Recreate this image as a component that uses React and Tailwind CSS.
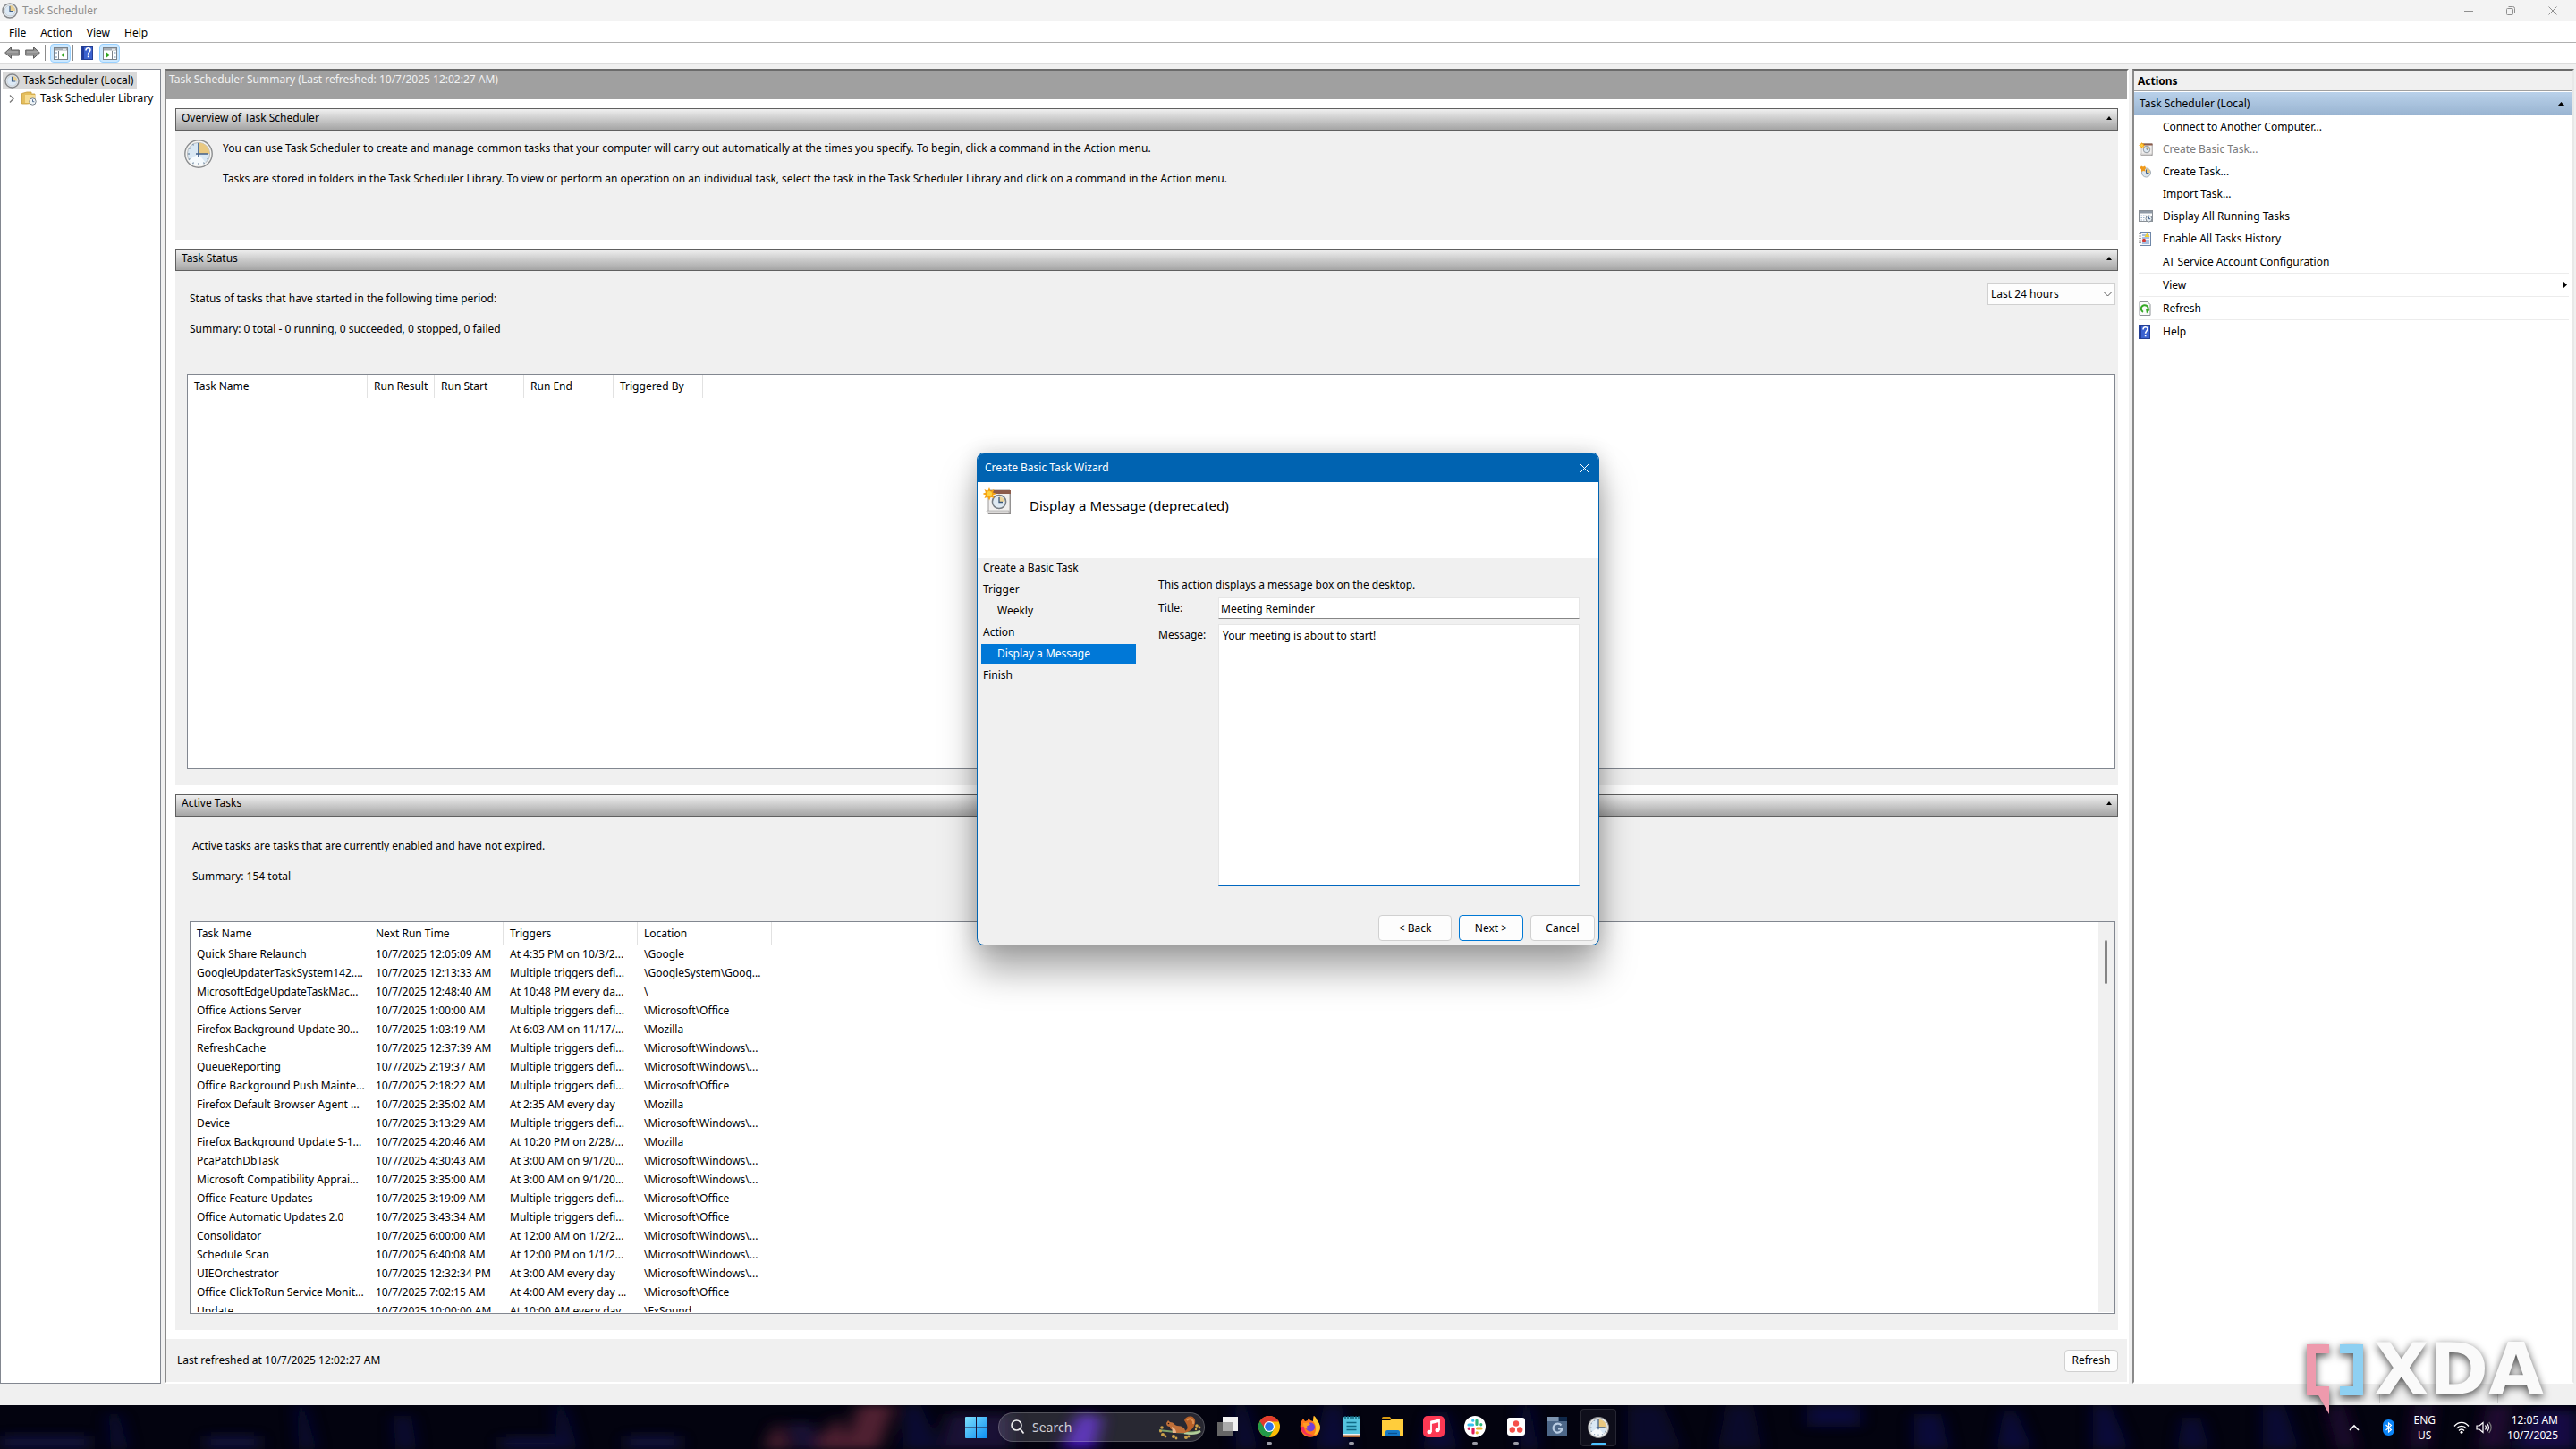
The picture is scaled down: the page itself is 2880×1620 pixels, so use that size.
import React, { useState } from "react";

const ACTIVE_TASKS = [
  ["Quick Share Relaunch", "10/7/2025 12:05:09 AM", "At 4:35 PM on 10/3/2...", "\\Google"],
  ["GoogleUpdaterTaskSystem142....", "10/7/2025 12:13:33 AM", "Multiple triggers defi...", "\\GoogleSystem\\Goog..."],
  ["MicrosoftEdgeUpdateTaskMac...", "10/7/2025 12:48:40 AM", "At 10:48 PM every da...", "\\"],
  ["Office Actions Server", "10/7/2025 1:00:00 AM", "Multiple triggers defi...", "\\Microsoft\\Office"],
  ["Firefox Background Update 30...", "10/7/2025 1:03:19 AM", "At 6:03 AM on 11/17/...", "\\Mozilla"],
  ["RefreshCache", "10/7/2025 12:37:39 AM", "Multiple triggers defi...", "\\Microsoft\\Windows\\..."],
  ["QueueReporting", "10/7/2025 2:19:37 AM", "Multiple triggers defi...", "\\Microsoft\\Windows\\..."],
  ["Office Background Push Mainte...", "10/7/2025 2:18:22 AM", "Multiple triggers defi...", "\\Microsoft\\Office"],
  ["Firefox Default Browser Agent ...", "10/7/2025 2:35:02 AM", "At 2:35 AM every day", "\\Mozilla"],
  ["Device", "10/7/2025 3:13:29 AM", "Multiple triggers defi...", "\\Microsoft\\Windows\\..."],
  ["Firefox Background Update S-1...", "10/7/2025 4:20:46 AM", "At 10:20 PM on 2/28/...", "\\Mozilla"],
  ["PcaPatchDbTask", "10/7/2025 4:30:43 AM", "At 3:00 AM on 9/1/20...", "\\Microsoft\\Windows\\..."],
  ["Microsoft Compatibility Apprai...", "10/7/2025 3:35:00 AM", "At 3:00 AM on 9/1/20...", "\\Microsoft\\Windows\\..."],
  ["Office Feature Updates", "10/7/2025 3:19:09 AM", "Multiple triggers defi...", "\\Microsoft\\Office"],
  ["Office Automatic Updates 2.0", "10/7/2025 3:43:34 AM", "Multiple triggers defi...", "\\Microsoft\\Office"],
  ["Consolidator", "10/7/2025 6:00:00 AM", "At 12:00 AM on 1/2/2...", "\\Microsoft\\Windows\\..."],
  ["Schedule Scan", "10/7/2025 6:40:08 AM", "At 12:00 PM on 1/1/2...", "\\Microsoft\\Windows\\..."],
  ["UIEOrchestrator", "10/7/2025 12:32:34 PM", "At 3:00 AM every day", "\\Microsoft\\Windows\\..."],
  ["Office ClickToRun Service Monit...", "10/7/2025 7:02:15 AM", "At 4:00 AM every day ...", "\\Microsoft\\Office"],
  ["Update", "10/7/2025 10:00:00 AM", "At 10:00 AM every day", "\\FxSound"],
];

// --- Small icons ---
function ClockIcon({ className }) {
  return (
    <svg viewBox="0 0 32 32" className={className} aria-hidden="true">
      <circle cx="16" cy="16" r="15.2" fill="#f4f4f2" stroke="#8b8d8f" strokeWidth="1.4" />
      <circle cx="16" cy="16" r="12.6" fill="#d9e8f4" stroke="#b9bcc0" strokeWidth="1" />
      <path d="M16 16 L5 23 A12.600 12.600 0 0 0 24 26 Z" fill="#f5fafd" />
      <path d="M16 16 V3.600 A12.400 12.400 0 0 1 28.400 16 Z" fill="#e9c981" />
      <g stroke="#7f95ab" strokeWidth="1.300">
        <path d="M16 26v2M4 16h2M9.500 4.800l1 1.700M4.800 9.500l1.700 1M4.800 22.500l1.700-1M9.500 27.200l1-1.700M22.500 27.200l-1-1.700M27.200 22.500l-1.700-1" />
      </g>
      <path d="M16 4v15M13 16h13" stroke="#40608a" strokeWidth="1.700" fill="none" />
    </svg>
  );
}

function SmallClockIcon({ className }) {
  return (
    <svg viewBox="0 0 18 18" className={className} aria-hidden="true">
      <circle cx="9" cy="9" r="8" fill="#e8eef4" stroke="#85878a" strokeWidth="1.500" />
      <circle cx="9" cy="9" r="6" fill="#dce9f5" stroke="#c3c6c9" strokeWidth=".8" />
      <path d="M9 9V3a6 6 0 0 1 6 6z" fill="#ecd08f" />
      <path d="M9 4v5.500h4" stroke="#3f5f87" strokeWidth="1.200" fill="none" />
    </svg>
  );
}

function FolderClockIcon() {
  return (
    <svg viewBox="0 0 17 16" className="h-4 w-[17px]" aria-hidden="true">
      <path d="M.5 2.500L6 1h5v2h4v10L6 14H.5z" fill="#e5be5c" stroke="#c79c3a" strokeWidth=".8" />
      <path d="M4 4h11v9H4z" fill="#f6dc92" />
      <circle cx="12.500" cy="11.500" r="3.700" fill="#eef4f8" stroke="#77818b" />
      <path d="M12.500 9.300v2.400h1.800" stroke="#3f5f87" fill="none" strokeWidth=".9" />
    </svg>
  );
}

function HelpIcon({ className }) {
  return (
    <svg viewBox="0 0 13 16" className={className} aria-hidden="true">
      <rect x=".5" y=".5" width="12" height="15" fill="#3b62cf" stroke="#243f94" />
      <rect x="1" y="1" width="2" height="14" fill="#203a9c" />
      <path d="M5 5.500c0-3.600 5-3.600 5-.7C10 7 7.600 7 7.600 9.800" fill="none" stroke="#fff" strokeWidth="1.600" />
      <rect x="6.800" y="11.500" width="1.700" height="1.800" fill="#fff" />
    </svg>
  );
}

function ArrowIcon({ flip }) {
  return (
    <svg viewBox="0 0 17 14" className="h-3.5 w-[17px]" aria-hidden="true">
      <path
        d={flip ? "M16.400 7L9.500.7V4H.7v6h8.800v3.300z" : "M.6 7L7.500.7V4h8.800v6H7.500v3.300z"}
        fill="#8f8f8f" stroke="#5f5f5f" strokeWidth="1"
      />
      <path d={flip ? "M2 6h12" : "M3 6h12"} stroke="#b5b5b5" />
    </svg>
  );
}

function PaneIcon({ right }) {
  return (
    <svg viewBox="0 0 16 14" className="h-3.5 w-4" aria-hidden="true">
      <rect x=".5" y=".5" width="15" height="13" fill="#fff" stroke="#7b8188" />
      <rect x="1" y="1" width="14" height="2.500" fill="#a7adb4" />
      <path d="M10 2.200h4" stroke="#fff" />
      <path d={right ? "M10.500 4v9" : "M5.500 4v9"} stroke="#7b8188" />
      <path d={right ? "M12 6h2.500M12 8.500h2.500M12 11h2.500" : "M1.500 6H4M1.500 8.500H4M1.500 11H4"} stroke="#6f8fb3" />
      <path d={right ? "M4 5.500l4 3-4 3z" : "M12 5.500l-4 3 4 3z"} fill="#2fa51e" />
    </svg>
  );
}

function NewTaskIcon({ className }) {
  return (
    <svg viewBox="0 0 32 32" className={className} aria-hidden="true">
      <path d="M6 4h25v26H6z" fill="#8d8b8b" />
      <path d="M6 3h24v25H6z" fill="#f1efee" stroke="#9c9a99" />
      <path d="M7 3h24v4H7z" fill="#8c5b4b" />
      <path d="M4 26h25v3H5z" fill="#dcdad9" stroke="#a09e9d" strokeWidth=".6" />
      <circle cx="18" cy="16" r="7.600" fill="#dfe9f2" stroke="#777d84" strokeWidth="1.500" />
      <path d="M18 16V10a6 6 0 0 1 6 6z" fill="#edd59b" />
      <path d="M18 11v5.500h4" stroke="#3c5878" strokeWidth="1.300" fill="none" />
      <path d="M7 0l1.600 3.700L12.500 2 11 5.600 15 7l-4 1.600L12.600 12 8.700 10.700 7 14.500 5.300 10.700 1.500 12 3 8.500-.5 7 3 5.500 1.500 2l3.800 1.700z" fill="#f6a313" />
      <circle cx="7" cy="7" r="3" fill="#ffd23f" />
    </svg>
  );
}

function CreateTaskIcon() {
  return (
    <svg viewBox="0 0 16 16" className="size-4" aria-hidden="true">
      <circle cx="8.500" cy="9" r="5" fill="#dce5ec" stroke="#a4adb5" />
      <path d="M8.500 9V4.500A4.500 4.500 0 0 1 13 9z" fill="#e9c57a" />
      <path d="M8.500 5.500V9.500h3" stroke="#41618a" fill="none" />
      <path d="M3 1.500l2 1 2-1 1 2-1 2.500 1 1.500-3-.5L3 8V5.500L1.500 3.500z" fill="#f09a1a" />
    </svg>
  );
}

function RunningIcon() {
  return (
    <svg viewBox="0 0 16 14" className="h-3.5 w-4" aria-hidden="true">
      <rect x=".5" y=".5" width="15" height="12" fill="#fbfbfb" stroke="#8a9097" />
      <rect x="1" y="1" width="14" height="2.500" fill="#8f99a5" />
      <path d="M2.500 6h6M2.500 8.500h5M2.500 11h5" stroke="#9bb3cc" strokeDasharray="1.500 1" />
      <circle cx="11.500" cy="9.500" r="3.500" fill="#e7eef3" stroke="#7c868f" />
      <path d="M11.500 7.500v2.200h1.600" stroke="#41618a" fill="none" />
    </svg>
  );
}

function HistoryIcon() {
  return (
    <svg viewBox="0 0 14 16" className="h-4 w-3.5" aria-hidden="true">
      <rect x="1.500" y=".5" width="12" height="15" fill="#f4f7fb" stroke="#6f87a8" />
      <path d="M.5 2.500h2M.5 5h2M.5 7.500h2M.5 10h2M.5 12.500h2" stroke="#555" />
      <path d="M4 4h8M4 7h8M4 10h8M4 13h8" stroke="#5b86c4" />
      <path d="M9.500 1.500L12.500 6h-6z" fill="#f2cf2e" />
      <circle cx="6" cy="9.800" r="2" fill="#d63a31" />
    </svg>
  );
}

function RefreshIcon() {
  return (
    <svg viewBox="0 0 14 16" className="h-4 w-3.5" aria-hidden="true">
      <path d="M1 .5h9l3 3v12H1z" fill="#fbfbfb" stroke="#8d9196" />
      <path d="M5 11.800A4 4 0 1 1 9.600 11" fill="none" stroke="#35a926" strokeWidth="2" />
      <path d="M8 8.500l4.500 1-3.500 4z" fill="#35a926" />
    </svg>
  );
}

// --- Shared pieces ---
function Section({ title, children, className }) {
  return (
    <section className={`flex flex-col bg-[#f0f0f0] ${className}`}>
      <h2 className="flex h-[25px] shrink-0 items-center justify-between border border-[#606060] bg-linear-to-b from-[#f0f0f0] to-[#a5a5a5] px-1.5 pb-1">
        <span>{title}</span>
        <svg viewBox="0 0 6 4" className="h-1 w-1.5" aria-hidden="true"><path d="M3 0l3 4H0z" /></svg>
      </h2>
      {children}
    </section>
  );
}

function HeadRow({ columns }) {
  return (
    <thead>
      <tr className="h-[26px]">
        {columns.map((c) => (
          <th key={c} scope="col" className="border-r border-[#e2e2e2] pl-[7px] text-left font-normal whitespace-nowrap">{c}</th>
        ))}
      </tr>
    </thead>
  );
}

function ActionItem({ icon, label, disabled, line, submenu }) {
  return (
    <li className={line ? "border-t border-[#ececec]" : ""}>
      <button disabled={disabled} className="flex h-[25px] w-full items-center text-left disabled:text-[#7a7a7a]">
        <span className="flex w-[27px] shrink-0">{icon}</span>
        <span className="flex-1">{label}</span>
        {submenu && <svg viewBox="0 0 5 9" className="mr-0.5 h-[9px] w-[5px]" aria-hidden="true"><path d="M0 0l5 4.500L0 9z" /></svg>}
      </button>
    </li>
  );
}

// --- Wizard dialog ---
function Wizard({ onClose }) {
  const [title, setTitle] = useState("Meeting Reminder");
  const [message, setMessage] = useState("Your meeting is about to start!");
  const button = "h-[29px] rounded border bg-[#fdfdfd]";

  return (
    <div className="pointer-events-none absolute inset-0 flex items-center justify-center pb-2">
      <div role="dialog" aria-labelledby="wizard-title" className="pointer-events-auto flex h-[551px] w-[696px] flex-col overflow-hidden rounded-lg border border-[#0063b1] bg-[#f0f0f0] shadow-[0_28px_40px_rgba(0,0,0,0.34),0_0_22px_rgba(0,0,0,0.16)]">
        <div className="flex h-8 shrink-0 items-center justify-between bg-[#0063b1] pr-2.5 pl-2 text-white">
          <h2 id="wizard-title">Create Basic Task Wizard</h2>
          <button aria-label="Close" onClick={onClose}>
            <svg viewBox="0 0 11 11" className="size-[11px]" aria-hidden="true"><path d="M.5.5l10 10M10.500.5l-10 10" stroke="#fff" /></svg>
          </button>
        </div>
        <div className="flex h-[85px] shrink-0 gap-5 bg-white pt-1.5 pl-1.5">
          <NewTaskIcon className="size-8" />
          <h3 className="pt-2.5 text-[15px] leading-5">Display a Message (deprecated)</h3>
        </div>

        <div className="flex flex-1">
          <ol className="flex w-[181px] flex-col pl-1 leading-[22px]">
            <li className="mb-0.5 pl-0.5">Create a Basic Task</li>
            <li className="mb-0.5 pl-0.5">Trigger</li>
            <li className="mb-0.5 pl-[18px]">Weekly</li>
            <li className="mb-0.5 pl-0.5">Action</li>
            <li className="mr-1 mb-0.5 bg-[#0078d7] pl-[18px] text-white">Display a Message</li>
            <li className="pl-0.5">Finish</li>
          </ol>
          <form className="flex flex-1 flex-col pt-5 pr-[21px] pl-[21px]" onSubmit={(e) => e.preventDefault()}>
            <p className="mb-1 leading-5">This action displays a message box on the desktop.</p>
            <div className="mb-1.5 flex items-center">
              <label htmlFor="msg-title" className="w-[67px]">Title:</label>
              <input id="msg-title" value={title} onChange={(e) => setTitle(e.target.value)} className="h-6 min-w-0 flex-1 border border-[#e6e6e6] border-b-[#868686] bg-white px-0.5 outline-none" />
            </div>
            <div className="flex">
              <label htmlFor="msg-body" className="w-[67px] pt-1">Message:</label>
              <textarea id="msg-body" value={message} onChange={(e) => setMessage(e.target.value)} className="h-[293px] min-w-0 flex-1 resize-none border border-b-2 border-[#e6e6e6] border-b-[#0067c0] bg-white px-1 pt-1 outline-none" />
            </div>
          </form>
        </div>

        <div className="flex justify-end gap-2 pr-1 pb-1">
          <button className={`${button} w-[82px] border-[#d0d0d0]`}>&lt; Back</button>
          <button className={`${button} w-[72px] border-[#0078d4]`}>Next &gt;</button>
          <button onClick={onClose} className={`${button} w-[72px] border-[#d0d0d0]`}>Cancel</button>
        </div>
      </div>
    </div>
  );
}

// --- Taskbar ---
const TASKBAR_APPS = [
  {
    name: "Task View",
    art: <><rect x="0" y="7" width="17" height="16" fill="#666" /><rect x="6" y="1" width="17" height="16" fill="#f2f2f2" /><rect x="6" y="7" width="11" height="10" fill="#aaa" /></>,
  },
  {
    name: "Google Chrome",
    dot: true,
    art: (
      <>
        <circle cx="12" cy="12" r="12" fill="#fbbc05" />
        <path d="M1.600 6A12 12 0 0 0 12 24l5.200-9L12 12z" fill="#229a48" />
        <path d="M12 6.500h10.600A12 12 0 0 0 1.600 6L7 14z" fill="#e33b2e" />
        <circle cx="12" cy="12" r="6" fill="#fff" />
        <circle cx="12" cy="12" r="4.800" fill="#2a72ec" />
      </>
    ),
  },
  {
    name: "Firefox",
    art: (
      <>
        <path d="M2 6l2-3 2 3 3-1c0-1 .5-2 1-2.500L12 5l3 1 .500-6c4 3 3 5 5 7 3 4 3 9 0 13-4 5-13 5-17 0C.5 16 0 10 2 6z" fill="#ff7a1c" />
        <path d="M16 0c3 2 3 5 5 7 3 5 2 8 0 11-1 2-3 3-5 3 3-4 3-11-1-15z" fill="#ffc52e" />
        <path d="M1 12c1 8 8 12 14 9-7 0-10-4-10-9z" fill="#f5305c" />
        <circle cx="12" cy="12.500" r="5" fill="#7440d8" />
        <path d="M4 8l6-.5 2 2-4 2 1 3c-4-1-5-3-5-6.500z" fill="#ff9c24" />
      </>
    ),
  },
  {
    name: "Notepad",
    dot: true,
    art: (
      <>
        <rect x="3" y="1" width="18" height="22" rx="1" fill="#55c3de" />
        <path d="M3 21h18v3H3z" fill="#a9602d" />
        <path d="M3 20h18v1.500H3z" fill="#eee" />
        <path d="M5 0v3M8 0v3M11 0v3M14 0v3M17 0v3M20 0v3" stroke="#11647c" strokeWidth="1.400" />
        <path d="M6.500 7.500h11M6.500 11.500h11M6.500 15.500h11" stroke="#0f6a86" strokeWidth="1.300" />
      </>
    ),
  },
  {
    name: "File Explorer",
    art: (
      <>
        <path d="M0 2.500Q0 1 1.500 1H9l2 3H0z" fill="#d79a12" />
        <path d="M0 5h9l2-1.500h13V23H0z" fill="#ffcd3c" />
        <path d="M4 23v-5q0-2 2-2h12q2 0 2 2v5z" fill="#1579c7" />
        <path d="M7 19.500h10" stroke="#0b4f8d" strokeWidth="1.300" />
      </>
    ),
  },
  {
    name: "Apple Music",
    art: (
      <>
        <rect width="24" height="24" rx="5" fill="#fb3853" />
        <path d="M9 18V6.500l9-2v11.500" fill="none" stroke="#fff" strokeWidth="1.800" />
        <path d="M9 7.500l9-2" stroke="#fff" strokeWidth="3" />
        <ellipse cx="7" cy="18" rx="2.600" ry="2.200" fill="#fff" />
        <ellipse cx="16" cy="16" rx="2.600" ry="2.200" fill="#fff" />
      </>
    ),
  },
  {
    name: "Slack",
    dot: true,
    art: (
      <>
        <circle cx="12" cy="12" r="12" fill="#fff" />
        <g strokeWidth="3.200" strokeLinecap="round">
          <path d="M5 10h4.500M9.700 5.200h.1" stroke="#36c5f0" />
          <path d="M14 5v4.500M18.800 9.700v.1" stroke="#2eb67d" />
          <path d="M14.500 14H19M14.200 18.800h.1" stroke="#ecb22e" />
          <path d="M10 14.500V19M5.200 14.200v.1" stroke="#e01e5a" />
        </g>
      </>
    ),
  },
  {
    name: "Asana",
    dot: true,
    art: (
      <>
        <rect x="2" y="2" width="20" height="20" rx="3" fill="#fff" />
        <circle cx="12" cy="8.500" r="3.200" fill="#f5504a" />
        <circle cx="7.800" cy="15.500" r="3.200" fill="#f5504a" />
        <circle cx="16.200" cy="15.500" r="3.200" fill="#f5504a" />
      </>
    ),
  },
  {
    name: "Google Play Games",
    art: (
      <>
        <path d="M1 1h22v22H1z" fill="#4d6788" />
        <path d="M1 1h12v5H1z" fill="#7d94b0" />
        <path d="M14 1h9v5h-9z" fill="#10294a" />
        <path d="M16.500 10.500a5 5 0 1 0 1 4h-4.500" fill="none" stroke="#b9cce2" strokeWidth="2.200" />
      </>
    ),
  },
];

function Squirrel() {
  return (
    <svg viewBox="0 0 50 28" className="h-7 w-[50px]" aria-hidden="true">
      <path d="M2 17c12 1 30 5 46 1" fill="none" stroke="#7fa06a" strokeWidth="2" />
      <path d="M30 20c6 1 14 1 18-2" fill="none" stroke="#b3cf9c" strokeWidth="2.500" />
      <path d="M30 18c7-2 2-9 0-12 2-7 14-6 12 3-1 5-4 9-12 11z" fill="#b96128" />
      <path d="M33 6c4-4 8 0 7 4" fill="none" stroke="#dc9052" strokeWidth="2" />
      <path d="M10 9l2-3 2 2c5 0 4 3 8 4 6 0 10 3 9 8H17l1-4c-3 1-4-1-4-3-2 0-4-1-4-4z" fill="#c0703a" />
      <path d="M16 13c4 2 5 5 5 7h-4z" fill="#e8b48a" />
      <circle cx="12.500" cy="9.500" r=".8" fill="#2a1208" />
      <g fill="#cda24a">
        <circle cx="5" cy="14" r="1.800" /><circle cx="3.500" cy="18" r="1.500" /><circle cx="6" cy="22" r="2" /><circle cx="9" cy="24" r="1.400" />
        <circle cx="18" cy="24" r="2" /><circle cx="21" cy="26" r="1.400" /><circle cx="32" cy="25" r="2" /><circle cx="35" cy="24" r="1.400" />
        <circle cx="44" cy="12" r="1.800" /><circle cx="47" cy="14" r="1.400" /><circle cx="43" cy="16" r="1.200" />
      </g>
    </svg>
  );
}

function Wallpaper() {
  return (
    <svg viewBox="0 0 2880 49" preserveAspectRatio="none" className="absolute inset-0 size-full" aria-hidden="true">
      <defs>
        <filter id="streak" x="-5%" y="-50%" width="110%" height="200%"><feGaussianBlur stdDeviation="9 6" /></filter>
      </defs>
      <rect width="2880" height="49" fill="#03030f" />
      <g filter="url(#streak)" opacity=".75">
        <path d="M0 34h100v15H0zM230 34h60v15h-60zM560 36h80v13h-80zM700 34h60v15h-60z" fill="#14164a" />
        <path d="M120 10h14l10 39h-20zM330 0h12l12 49h-20zM440 12h20l6 37h-24zM620 0h12l14 49h-24zM1010 0h20l20 49h-40z" fill="#070b40" />
        <path d="M855 49l14-32 12 32zM908 49l30-38 10 38zM960 0h40l-18 49h-40z" fill="#6a2c3c" />
        <path d="M880 20h30l6 29h-30zM1060 10h70v39h-80z" fill="#211243" />
        <path d="M1186 49l20-40 26 4-8 36z" fill="#5a1ee6" />
        <path d="M1380 0h14l12 49h-24zM1480 0h20l10 49h-40zM1600 8h18l12 41h-40zM1700 0h12l8 49h-20z" fill="#080d45" />
        <path d="M1820 0h40l20 49h-60zM1930 0h30l10 49h-50z" fill="#100a34" />
        <path d="M2020 0h60v24h-60zM2140 10h30l10 39h-40zM2240 6h14l18 43h-40zM2340 0h20l20 49h-40z" fill="#070c48" />
        <path d="M2440 14h20l10 35h-36zM2530 0h24l16 49h-40z" fill="#080e42" />
        <path d="M2600 0h20l14 49h-20zM2700 0h20l-6 49h-20zM2780 0h30l-10 49h-30z" fill="#2a0f3c" />
        <path d="M2830 6h50v43h-70z" fill="#1a1058" />
      </g>
    </svg>
  );
}

function Taskbar() {
  return (
    <footer className="relative h-[49px] shrink-0 text-white">
      <Wallpaper />
      <div className="relative grid h-full grid-cols-[1fr_auto_1fr] items-center">
        <span />
        <nav className="flex h-full items-center" aria-label="Taskbar">
          <button aria-label="Start" className="mr-3 ml-1.5">
            <svg viewBox="0 0 25 24" className="h-6 w-[25px]" aria-hidden="true">
              <defs>
                <linearGradient id="win" x1="0" y1="0" x2="1" y2="1"><stop offset="0" stopColor="#7fe0fb" /><stop offset="1" stopColor="#0a8df5" /></linearGradient>
              </defs>
              <path d="M0 1q0-1 1-1h11v11.500H0zM13 0h11q1 0 1 1v10.500H13zM0 12.500h12V24H1q-1 0-1-1zM13 12.500h12V23q0 1-1 1H13z" fill="url(#win)" />
            </svg>
          </button>
          <label className="mr-3.5 flex h-[33px] w-[231px] items-center rounded-full border border-white/20 bg-white/15 pr-0.5 pl-3">
            <svg viewBox="0 0 17 17" className="size-[17px] shrink-0" aria-hidden="true"><circle cx="7.500" cy="6.500" r="5.500" fill="none" stroke="#eee" strokeWidth="1.600" /><path d="M11.500 10.500l4 5" stroke="#eee" strokeWidth="1.800" /></svg>
            <input aria-label="Search" placeholder="Search" className="ml-2 min-w-0 flex-1 text-sm outline-none placeholder:text-[#cfcfd6]" />
            <Squirrel />
          </label>
          {TASKBAR_APPS.map((app) => (
            <button key={app.name} aria-label={app.name} className="mr-[22px] flex h-full w-6 flex-col items-center pt-3">
              <svg viewBox="0 0 24 24" className="size-6" aria-hidden="true">{app.art}</svg>
              {app.dot && <span className="mt-[5px] h-[3px] w-1.5 rounded-full bg-[#9b9ba6]" />}
            </button>
          ))}
          <button aria-label="Task Scheduler" className="-ml-2 flex h-[42px] w-10 flex-col items-center rounded border border-white/10 bg-white/5 pt-2">
            <ClockIcon className="size-6" />
            <span className="mt-[5px] h-[3px] w-[17px] rounded-full bg-[#4cc2ff]" />
          </button>
        </nav>
        <div className="flex items-center justify-end pr-5 leading-[17px]">
          <button aria-label="Show hidden icons" className="mr-[26px]">
            <svg viewBox="0 0 12 8" className="h-2 w-3" aria-hidden="true"><path d="M1 7l5-5 5 5" fill="none" stroke="#fff" strokeWidth="1.600" /></svg>
          </button>
          <button aria-label="Bluetooth" className="mr-[21px]">
            <svg viewBox="0 0 13 18" className="h-[18px] w-[13px]" aria-hidden="true"><rect width="13" height="18" rx="6" fill="#0a84f7" /><path d="M3.500 6l6 5.500L6.500 14V4l3 2.500-6 5.500" fill="none" stroke="#fff" strokeWidth="1.100" /></svg>
          </button>
          <button className="mr-5 text-center">ENG<br />US</button>
          <button aria-label="Network and volume" className="mr-[17px] flex gap-[7px]">
            <svg viewBox="0 0 18 14" className="h-3.5 w-[18px]" aria-hidden="true"><g fill="none" stroke="#fff" strokeWidth="1.300"><path d="M1 5.500C5.500 0 12.500 0 17 5.500M3.500 8c3-3.600 8-3.600 11 0M6 10.500c1.700-2 4.300-2 6 0" /></g><circle cx="9" cy="12.200" r="1.500" fill="#fff" /></svg>
            <svg viewBox="0 0 18 14" className="h-3.5 w-[18px]" aria-hidden="true"><path d="M1 5h3l4-3.500v11L4 9H1z" fill="none" stroke="#fff" strokeWidth="1.200" /><path d="M10.500 4.500q2 2.500 0 5M12.500 2.500q4 4.500 0 9" fill="none" stroke="#fff" strokeWidth="1.200" /><path d="M14.700 1q5 6 0 12" fill="none" stroke="#777" strokeWidth="1.200" /></svg>
          </button>
          <time className="text-right">12:05 AM<br />10/7/2025</time>
        </div>
      </div>
    </footer>
  );
}

function XdaLogo() {
  return (
    <div className="pointer-events-none absolute right-9 bottom-[39px] flex items-start gap-3 drop-shadow-[0_3px_5px_rgba(0,0,0,0.7)]">
      <svg viewBox="0 0 63 78" className="h-[78px] w-[63px]" aria-hidden="true">
        <path d="M0 0h25v10H10v37h15v31L13 57H0z" fill="#ee9aad" />
        <path d="M37 0h26v57H37V47h15V10H37z" fill="#8ed0f2" />
      </svg>
      <span className="font-['DejaVu_Sans',sans-serif] text-[80px] leading-[58px] font-bold text-[#fafafa]">XDA</span>
    </div>
  );
}

export default function App() {
  const [wizardOpen, setWizardOpen] = useState(true);
  const [period, setPeriod] = useState("Last 24 hours");

  return (
    <div className="flex h-screen flex-col overflow-hidden bg-[#f0f0f0] font-['Noto_Sans','Open_Sans',sans-serif] text-xs text-black">
      <div className="relative flex min-h-0 flex-1 flex-col">
        {/* Title bar */}
        <header className="flex h-6 shrink-0 items-center bg-[#f3f3f3] pl-0.5 text-[#8f8f8f]">
          <SmallClockIcon className="size-[18px]" />
          <h1 className="ml-[5px] flex-1">Task Scheduler</h1>
          <div className="flex items-center gap-[37px] pr-[21px]">
            <button aria-label="Minimize"><svg viewBox="0 0 10 10" className="size-2.5" aria-hidden="true"><path d="M0 5.500h10" stroke="#8f8f8f" /></svg></button>
            <button aria-label="Restore"><svg viewBox="0 0 10 10" className="size-2.5" aria-hidden="true"><rect x=".5" y="2.500" width="7" height="7" rx="1" fill="none" stroke="#8f8f8f" /><path d="M2.500.5h5q2 0 2 2v5" fill="none" stroke="#8f8f8f" /></svg></button>
            <button aria-label="Close"><svg viewBox="0 0 10 10" className="size-2.5" aria-hidden="true"><path d="M.5.5l9 9M9.500.5l-9 9" stroke="#8f8f8f" /></svg></button>
          </div>
        </header>
        <nav className="flex h-6 shrink-0 items-center gap-4 border-b border-[#b0b0b0] bg-white pt-0.5 pl-2.5" aria-label="Menu">
          <button>File</button>
          <button>Action</button>
          <button>View</button>
          <button>Help</button>
        </nav>
        <div className="flex h-[23px] shrink-0 items-center border-b border-[#dcdcdc] bg-white pl-[5px]">
          <button aria-label="Back" className="mr-1.5"><ArrowIcon /></button>
          <button aria-label="Forward"><ArrowIcon flip /></button>
          <span className="mx-[5px] h-[18px] w-px bg-[#8c8c8c]" />
          <button aria-label="Show console tree" className="flex h-[21px] w-[23px] items-center justify-center rounded-sm border border-[#99d1ff] bg-[#cce8ff] pt-0.5"><PaneIcon /></button>
          <span className="ml-0.5 h-[18px] w-px bg-[#8c8c8c]" />
          <button aria-label="Help" className="mx-[9px]"><HelpIcon className="h-4 w-[13px]" /></button>
          <button aria-label="Show action pane" className="-ml-0.5 flex h-[21px] w-[23px] items-center justify-center rounded-sm border border-[#99d1ff] bg-[#cce8ff] pt-0.5"><PaneIcon right /></button>
        </div>

        <main className="flex min-h-0 flex-1 gap-1 pt-1.5 pr-0.5">
          {/* Console tree */}
          <aside className="w-[180px] shrink-0 border border-[#828790] bg-white">
            <ul className="pt-0.5 pl-0.5 leading-5">
              <li className="flex w-fit items-center gap-1 bg-[#d9d9d9] pr-1 pl-0.5"><SmallClockIcon className="size-[17px]" />Task Scheduler (Local)</li>
              <li className="flex items-center">
                <svg viewBox="0 0 6 9" className="mr-2 ml-[7px] h-[9px] w-1.5" aria-hidden="true"><path d="M1 .5l4 4-4 4" fill="none" stroke="#777" strokeWidth="1.300" /></svg>
                <FolderClockIcon />
                <span className="ml-1 whitespace-nowrap">Task Scheduler Library</span>
              </li>
            </ul>
          </aside>

          {/* Summary pane */}
          <div className="flex min-w-0 flex-1 flex-col border-2 border-t-[#6b6b6b] border-r-white border-b-white border-l-[#8a8a8a] bg-white">
            <div className="h-8 shrink-0 bg-[#a0a0a0] pt-0.5 pl-[3px] text-[#f2f2f2]">Task Scheduler Summary (Last refreshed: 10/7/2025 12:02:27 AM)</div>
            <div className="flex min-h-0 flex-1 flex-col gap-2.5 p-2.5">
              <Section title="Overview of Task Scheduler" className="h-[147px] shrink-0">
                <div className="flex gap-[11px] px-2.5 pt-2.5">
                  <ClockIcon className="size-8 shrink-0" />
                  <div className="flex flex-col gap-3.5 leading-5">
                    <p>You can use Task Scheduler to create and manage common tasks that your computer will carry out automatically at the times you specify. To begin, click a command in the Action menu.</p>
                    <p>Tasks are stored in folders in the Task Scheduler Library. To view or perform an operation on an individual task, select the task in the Task Scheduler Library and click on a command in the Action menu.</p>
                  </div>
                </div>
              </Section>

              <Section title="Task Status" className="min-h-0 flex-1">
                <div className="flex min-h-0 flex-1 flex-col pt-[13px] pr-[3px] pb-[18px] pl-[13px]">
                  <div className="mb-10 flex justify-between pl-[3px]">
                    <div className="flex flex-col gap-3.5 pt-2 leading-5">
                      <p>Status of tasks that have started in the following time period:</p>
                      <p>Summary: 0 total - 0 running, 0 succeeded, 0 stopped, 0 failed</p>
                    </div>
                    <div className="relative h-[25px]">
                      <select aria-label="Time period" value={period} onChange={(e) => setPeriod(e.target.value)} className="h-full w-[143px] appearance-none border border-[#d0d0d0] bg-[#fdfdfd] pl-[3px]">
                        <option>Last hour</option>
                        <option>Last 24 hours</option>
                        <option>Last 7 days</option>
                        <option>Last 30 days</option>
                      </select>
                      <svg viewBox="0 0 9 6" className="pointer-events-none absolute top-2.5 right-1 h-1.5 w-[9px]" aria-hidden="true"><path d="M.5 1l4 4 4-4" fill="none" stroke="#555" /></svg>
                    </div>
                  </div>
                  <div className="min-h-0 flex-1 border border-[#828790] bg-white">
                    <table className="w-[576px] table-fixed border-separate border-spacing-0">
                      <colgroup><col className="w-[201px]" /><col className="w-[75px]" /><col className="w-[100px]" /><col className="w-[100px]" /><col className="w-[100px]" /></colgroup>
                      <HeadRow columns={["Task Name", "Run Result", "Run Start", "Run End", "Triggered By"]} />
                    </table>
                  </div>
                </div>
              </Section>

              <Section title="Active Tasks" className="min-h-0 flex-1">
                <div className="flex min-h-0 flex-1 flex-col pt-[23px] pr-[3px] pb-[18px] pl-4">
                  <div className="mb-10 flex flex-col gap-3.5 pl-[3px] leading-5">
                    <p>Active tasks are tasks that are currently enabled and have not expired.</p>
                    <p>Summary: 154 total</p>
                  </div>
                  <div className="flex min-h-0 flex-1 border border-[#828790] bg-white pr-px pb-px">
                    <div className="flex-1 overflow-hidden">
                      <table className="w-[650px] table-fixed border-separate border-spacing-0">
                        <colgroup><col className="w-[200px]" /><col className="w-[150px]" /><col className="w-[150px]" /><col className="w-[150px]" /></colgroup>
                        <HeadRow columns={["Task Name", "Next Run Time", "Triggers", "Location"]} />
                        <tbody>
                          {ACTIVE_TASKS.map((row) => (
                            <tr key={row[0]} className="h-[21px]">
                              {row.map((cell, i) => <td key={i} className="px-[7px] leading-5 whitespace-nowrap">{cell}</td>)}
                            </tr>
                          ))}
                        </tbody>
                      </table>
                    </div>
                    <div className="flex w-[17px] justify-center bg-[#f0f0f0] pt-5">
                      <div className="h-[49px] w-[3px] rounded-full bg-[#858585]" />
                    </div>
                  </div>
                </div>
              </Section>
            </div>
            <div className="flex h-12 shrink-0 items-center justify-between bg-[#f0f0f0] pr-2.5 pl-3">
              <span>Last refreshed at 10/7/2025 12:02:27 AM</span>
              <button className="h-[25px] w-[60px] rounded border border-[#d0d0d0] bg-[#fdfdfd]">Refresh</button>
            </div>
          </div>

          {/* Actions pane */}
          <aside className="w-[494px] shrink-0 border-2 border-t-[#6b6b6b] border-r-[#e8e8e8] border-b-white border-l-[#8a8a8a] bg-white">
            <h2 className="flex h-[23px] items-center border-b border-[#a0a0a0] bg-[#f0f0f0] pt-0.5 pl-1 font-bold">Actions</h2>
            <h3 className="mt-px flex h-[26px] items-center justify-between bg-linear-to-b from-[#b9d1ea] to-[#99b4d1] pr-2 pl-1.5">
              Task Scheduler (Local)
              <svg viewBox="0 0 9 5" className="h-[5px] w-[9px]" aria-hidden="true"><path d="M4.500 0L9 5H0z" /></svg>
            </h3>
            <ul className="pr-1 pl-[5px]">
              <ActionItem label="Connect to Another Computer..." />
              <ActionItem label="Create Basic Task..." disabled icon={<NewTaskIcon className="size-4" />} />
              <ActionItem label="Create Task..." icon={<CreateTaskIcon />} />
              <ActionItem label="Import Task..." />
              <ActionItem label="Display All Running Tasks" icon={<RunningIcon />} />
              <ActionItem label="Enable All Tasks History" icon={<HistoryIcon />} />
              <ActionItem label="AT Service Account Configuration" line />
              <ActionItem label="View" line submenu />
              <ActionItem label="Refresh" line icon={<RefreshIcon />} />
              <ActionItem label="Help" line icon={<HelpIcon className="h-4 w-[13px]" />} />
            </ul>
          </aside>
        </main>

        {/* Status bar */}
        <div className="flex h-6 shrink-0 justify-end py-0.5">
          <span className="w-[132px] border-l border-[#d0d0d0]" />
          <span className="w-[88px] border-l border-[#d0d0d0]" />
        </div>

        {wizardOpen && <Wizard onClose={() => setWizardOpen(false)} />}
      </div>
      <div className="relative">
        <Taskbar />
        <XdaLogo />
      </div>
    </div>
  );
}
